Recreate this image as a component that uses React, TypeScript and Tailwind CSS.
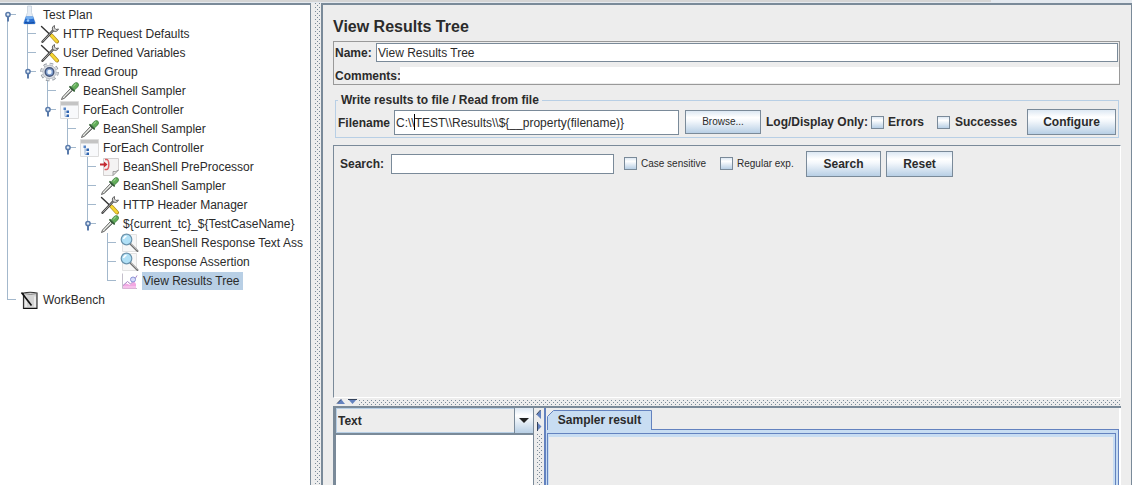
import { ReactNode, useState } from "react";

type IconName =
  | "flask"
  | "tools"
  | "gear"
  | "dropper"
  | "controller"
  | "pre"
  | "magnifier"
  | "chart"
  | "workbench";

interface TreeNode {
  label: string;
  depth: number;
  icon: IconName;
  open?: boolean;
}

const nodes: TreeNode[] = [
  { label: "Test Plan", depth: 0, icon: "flask", open: true },
  { label: "HTTP Request Defaults", depth: 1, icon: "tools" },
  { label: "User Defined Variables", depth: 1, icon: "tools" },
  { label: "Thread Group", depth: 1, icon: "gear", open: true },
  { label: "BeanShell Sampler", depth: 2, icon: "dropper" },
  { label: "ForEach Controller", depth: 2, icon: "controller", open: true },
  { label: "BeanShell Sampler", depth: 3, icon: "dropper" },
  { label: "ForEach Controller", depth: 3, icon: "controller", open: true },
  { label: "BeanShell PreProcessor", depth: 4, icon: "pre" },
  { label: "BeanShell Sampler", depth: 4, icon: "dropper" },
  { label: "HTTP Header Manager", depth: 4, icon: "tools" },
  { label: "${current_tc}_${TestCaseName}", depth: 4, icon: "dropper", open: true },
  { label: "BeanShell Response Text Ass", depth: 5, icon: "magnifier" },
  { label: "Response Assertion", depth: 5, icon: "magnifier" },
  { label: "View Results Tree", depth: 5, icon: "chart" },
  { label: "WorkBench", depth: 0, icon: "workbench" },
];

const icons: Record<IconName, ReactNode> = {
  flask: (
    <>
      <path d="M7.5 1v6.500L3.800 17.500q-.300 1.500 1 1.500h9.400q1.300 0 1-1.500L11.500 7.500V1z" fill="#e6edf5" stroke="#c3cfdc" strokeWidth=".8" />
      <path d="M6 11.500h7l2.200 6q.300 1.500-1 1.500H4.800q-1.300 0-1-1.500z" fill="#2a6fd0" />
      <path d="M6 11.500h7l.7 2q-4 1.500-8.400 0z" fill="#74aff0" />
      <path d="M5 17.500q4.500 1.300 9 0" stroke="#154a9c" />
      <circle cx="8" cy="15.500" r="1.300" fill="#9cccfa" />
    </>
  ),
  tools: (
    <>
      <path d="M1.500 2.500l9 8.500" stroke="#333" strokeWidth="1.400" strokeLinecap="round" />
      <path d="M11.500 11.500l5.500 6" stroke="#a8861c" strokeWidth="4" strokeLinecap="round" />
      <path d="M11.500 11.500l5.300 5.800" stroke="#f5d532" strokeWidth="2.600" strokeLinecap="round" />
      <path d="M2.500 17.800L13 6.500" stroke="#3f3f3f" strokeWidth="2.400" strokeLinecap="round" />
      <path d="M3 17.200L13 6.500" stroke="#b5b5b5" strokeWidth=".9" strokeLinecap="round" />
      <path d="M14.500 1.500q-2.800 1-2.200 3.700.8 2.700 3.500 2.300 2-.500 2.700-2.500l-2.500.500-1.500-1.500z" fill="#d2d2d2" stroke="#4a4a4a" strokeWidth=".8" />
    </>
  ),
  gear: (
    <>
      <circle cx="9.500" cy="10" r="7.800" stroke="#8d939b" strokeWidth="3" strokeDasharray="3.300 2.830" />
      <circle cx="9.500" cy="10" r="7.300" stroke="#dfe2e6" strokeWidth="2.400" strokeDasharray="2.500 3.230" strokeDashoffset="-.4" />
      <circle cx="9.500" cy="10" r="6.700" fill="#dde0e5" stroke="#a3a9b1" strokeWidth=".6" />
      <circle cx="9.500" cy="10" r="4.300" fill="#7f9fd0" stroke="#44557a" strokeWidth="1.400" />
      <circle cx="9.500" cy="10" r="2.200" fill="#f1f6fd" />
    </>
  ),
  dropper: (
    <>
      <path d="M1.500 18.500l1-2.500L10.500 7.500l2 2-8.200 7.800z" fill="#e9ece6" stroke="#555" strokeWidth=".9" />
      <path d="M4.500 16.500l7.500-7.300" stroke="#777" strokeWidth=".8" />
      <path d="M10 5.800l4.200 4" stroke="#2e5c30" strokeWidth="1.800" strokeLinecap="round" />
      <path d="M11.500 5.500l2.700-3q2-1.700 3.800-.3 1.400 1.800-.2 3.700l-3.300 3z" fill="#62ae58" stroke="#3b7a3d" strokeWidth=".7" />
      <path d="M13.500 5l2.400-2.300" stroke="#b4e3ab" />
    </>
  ),
  controller: (
    <>
      <path d="M.5 1.500h18v17H.5z" fill="#f8f9fb" stroke="#dcdcdc" />
      <path d="M1 2h17v3.500H1z" fill="#c4c4c4" />
      <path d="M.5 1.500h18" stroke="#dedede" />
      <path d="M5 8v8.500h3M5 12h3" stroke="#9db6d5" />
      <path d="M3.500 7.500h2.500v2.500H3.500z" fill="#5585c8" />
      <path d="M6.500 10.500H9V13H6.500zM6.500 14.500H9V17H6.500z" fill="#2f64b0" />
    </>
  ),
  pre: (
    <>
      <path d="M3.500 1.500h15v11.500l-5.500 5.500H3.500z" fill="#f4f3f3" stroke="#d2cfcf" />
      <path d="M18.500 13l-5.500 5.500v-4q3 .800 5.500-1.500z" fill="#e3e3e3" stroke="#8e8e8e" strokeWidth=".8" />
      <path d="M0 7.500h5" stroke="#c52b32" strokeWidth="2" />
      <path d="M4 4.500l3.500 3L4 10.500z" fill="#c52b32" />
      <path d="M5 2.500h1.500q2.300 0 2.300 5t-2.300 5H4.500" stroke="#dd6266" strokeWidth="1.500" />
    </>
  ),
  magnifier: (
    <>
      <path d="M2.500 1.500h14v17h-14z" fill="#f7f7f7" stroke="#e2e2e2" />
      <path d="M10.500 11l7 7" stroke="#6f6f6f" strokeWidth="2" strokeLinecap="round" />
      <path d="M11 11l6.500 6.500" stroke="#d0d0d0" strokeWidth=".7" />
      <circle cx="6.500" cy="6.500" r="5.300" fill="#b0e0f6" stroke="#6b93ad" strokeWidth="1.200" />
      <path d="M3.500 6q.7-2.400 3-2.700" stroke="#fff" strokeWidth="1.500" />
    </>
  ),
  chart: (
    <>
      <path d="M2.500 2.500v15H17" stroke="#c4bfcb" />
      <path d="M3 14.500q3-3 5-1.500 2 2 4-1t4 1v4.500H3z" fill="#f2a8e2" />
      <path d="M3 14.500l4.500-4 3 2.500 3.500-3.500 3-5" stroke="#a985c5" />
      <circle cx="13" cy="8.500" r="2.500" fill="#d9dcfa" stroke="#8a93d6" />
      <path d="M3 16h13" stroke="#fad7f4" />
    </>
  ),
  workbench: (
    <>
      <path d="M3.500 3q6.500-1.500 13.500 0v15.500H3.500z" fill="#d4d4d4" stroke="#333" strokeWidth="1.200" />
      <path d="M4.500 3.500q6 2 12 0" stroke="#777" strokeWidth=".8" />
      <path d="M6 6.500v10.500M15 6.500v10.500" stroke="#efefef" strokeWidth="1.600" />
      <path d="M3.500 18.500H17" stroke="#111" strokeWidth="1.400" />
      <path d="M1.500 2.500l10 13" stroke="#111" strokeWidth="1.700" />
    </>
  ),
};

// a guide line goes on below row i when a later sibling sits at that depth
function continues(i: number, depth: number) {
  const next = nodes.slice(i + 1).find((n) => n.depth <= depth);
  return next?.depth === depth;
}

function TreeRow({ node, index, selected, onSelect }: { node: TreeNode; index: number; selected: boolean; onSelect: () => void }) {
  const parents = Array.from({ length: node.depth }, (_, d) => d);
  return (
    <li className="flex h-[19px] items-center">
      {parents.map((d) => (
        <span key={d} className="h-full w-5 shrink-0 pl-[7px]">
          <span className={`block h-full w-px ${continues(index, d) ? "bg-[#a3b8cc]" : ""}`} />
        </span>
      ))}
      <span className="relative h-full w-5 shrink-0 pl-[7px]">
        <span className={`block h-[10px] w-[9px] border-b border-[#a3b8cc] ${index > 0 ? "border-l" : ""}`} />
        <span className={`block h-[9px] w-px ${continues(index, node.depth) ? "bg-[#a3b8cc]" : ""}`} />
        {node.open && (
          <svg viewBox="0 0 7 11" className="absolute left-[5px] top-[6px] h-[11px] w-[7px]">
            <path d="M3 5v5.500" stroke="#5a7bab" strokeWidth="2" />
            <circle cx="3" cy="3.500" r="2.100" fill="#e4edf7" stroke="#5a7bab" strokeWidth="1.500" />
          </svg>
        )}
      </span>
      <svg viewBox="0 0 20 20" fill="none" className="h-5 w-5 shrink-0">
        {icons[node.icon]}
      </svg>
      <button
        onClick={onSelect}
        className={`ml-[2px] h-[18px] shrink-0 whitespace-nowrap pl-px pr-[3px] text-left ${selected ? "bg-[#b8cfe5]" : ""}`}
      >
        {node.label}
      </button>
    </li>
  );
}

const buttonLook =
  "shrink-0 border border-[#7a8a99] bg-[linear-gradient(#dde8f3,#ffffff_30%,#f4f8fc_45%,#b8cfe5)] text-center";
const fieldLook = "border border-[#7a8a99] bg-white outline-none";
const dots =
  "bg-[conic-gradient(from_270deg_at_1px_1px,#7a8a99_90deg,transparent_0),conic-gradient(from_270deg_at_1px_1px,#7a8a99_90deg,transparent_0)] bg-[size:4px_4px] bg-[position:0_0,2px_2px]";

function Check({ label, className }: { label: string; className: string }) {
  return (
    <label className={`flex shrink-0 items-center whitespace-nowrap ${className}`}>
      <input
        type="checkbox"
        className="h-[13px] w-[13px] shrink-0 appearance-none border border-[#7a8a99] bg-[linear-gradient(#dde8f3,#ffffff_30%,#b8cfe5)] checked:bg-[#6382bf]"
      />
      {label}
    </label>
  );
}

export default function App() {
  const [selected, setSelected] = useState(14);
  const [name, setName] = useState("View Results Tree");
  const [comments, setComments] = useState("");
  const [filename, setFilename] = useState("C:\\\\TEST\\\\Results\\\\${__property(filename)}");
  const [query, setQuery] = useState("");

  return (
    <div className="flex h-screen flex-col overflow-hidden bg-[#ededed] font-['Liberation_Sans',Arial,sans-serif] text-xs text-[#2b2b2b]">
      <div className="flex h-[3px] shrink-0 bg-[#e4e9ef]">
        <div className="h-[2px] w-7/8 bg-[#d5d5d5]" />
      </div>
      <div className="flex min-h-0 flex-1">
        <nav className="w-[311px] shrink-0 overflow-hidden border-r border-t-2 border-[#7a8a99] bg-white pr-px">
          <ul className="overflow-hidden">
            {nodes.map((node, i) => (
              <TreeRow key={i} node={node} index={i} selected={i === selected} onSelect={() => setSelected(i)} />
            ))}
          </ul>
        </nav>
        <div className="w-[10px] shrink-0 px-1">
          <div className={`h-full w-[5px] ${dots}`} />
        </div>

        <main className="flex min-w-0 flex-1 flex-col border-l-2 border-r border-t-2 border-l-[#7a8a99] border-r-[#7a8a99] border-t-[#7a8a99] px-[10px]">
          <h1 className="mt-3 text-base leading-5 font-bold">View Results Tree</h1>

          <div className="mt-1 mr-px border border-[#999] pb-px">
            <div className="flex items-center pt-px pr-px">
              <label htmlFor="name" className="w-[42px] shrink-0 pl-px pt-px font-bold">Name:</label>
              <input
                id="name"
                value={name}
                onChange={(e) => setName(e.target.value)}
                className={`h-[19px] min-w-0 flex-1 px-px pt-px ${fieldLook}`}
              />
            </div>
            <div className="mt-[5px] flex h-4 items-center">
              <label htmlFor="comments" className="w-[66px] shrink-0 pl-px pt-[2px] font-bold">Comments:</label>
              <input
                id="comments"
                value={comments}
                onChange={(e) => setComments(e.target.value)}
                className="h-4 min-w-0 flex-1 bg-white outline-none"
              />
            </div>
          </div>

          <fieldset className="mx-[2px] mt-2 min-w-0 border border-[#b8cfe5] px-[2px] pt-[2px] pb-[2px]">
            <legend className="px-[3px] leading-[14px] font-bold">Write results to file / Read from file</legend>
            <div className="flex items-center font-bold">
              <label htmlFor="filename" className="w-14 shrink-0 pt-px">Filename</label>
              <div className="relative min-w-0 flex-1">
                <input
                  id="filename"
                  value={filename}
                  onChange={(e) => setFilename(e.target.value)}
                  className={`block h-[25px] w-full px-px pt-px font-normal ${fieldLook}`}
                />
                <span className="absolute left-5 top-1 h-4 w-px bg-black" />
              </div>
              <button className={`ml-[6px] h-6 w-[76px] text-[10px] font-normal ${buttonLook}`}>Browse...</button>
              <span className="ml-[5px] w-[105px] shrink-0 whitespace-nowrap">Log/Display Only:</span>
              <Check label="Errors" className="w-[66px] gap-1" />
              <Check label="Successes" className="w-[90px] gap-[5px]" />
              <button className={`h-[26px] w-[89px] font-bold ${buttonLook}`}>Configure</button>
            </div>
          </fieldset>

          <section className="mt-[7px] min-h-[180px] flex-1 border border-b-white border-l-[#7a8a99] border-r-white border-t-[#7a8a99]">
            <form className="mt-[5px] flex items-center pl-[6px]" onSubmit={(e) => e.preventDefault()}>
              <label htmlFor="search" className="w-[51px] shrink-0 font-bold">Search:</label>
              <input
                id="search"
                value={query}
                onChange={(e) => setQuery(e.target.value)}
                className={`h-5 w-[223px] min-w-0 px-px ${fieldLook}`}
              />
              <Check label="Case sensitive" className="ml-[10px] w-24 gap-1 text-[10px]" />
              <Check label="Regular exp." className="w-[86px] gap-1 text-[10px]" />
              <button className={`h-[26px] w-[75px] font-bold ${buttonLook}`}>Search</button>
              <button className={`ml-[5px] h-[26px] w-[67px] font-bold ${buttonLook}`}>Reset</button>
            </form>
          </section>

          <div className="flex h-2 shrink-0 items-center">
            <svg viewBox="0 0 26 8" className="h-2 w-[26px] shrink-0">
              <path d="M4 6l4-5 4 5z" fill="#6382bf" />
              <path d="M15 1h9l-4.500 5z" fill="#6382bf" />
              <path d="M4 5.500l4-4M15 1.500h9" stroke="#34435c" />
            </svg>
            <div className={`h-[5px] flex-1 ${dots}`} />
          </div>

          <div className="flex h-[79px] shrink-0 border-t-2 border-[#7a8a99]">
            <div className="flex w-[201px] shrink-0 flex-col border-l-[3px] border-r border-[#7a8a99] bg-white">
              <div className="relative border-b-2 border-[#7a8a99]">
                <select
                  aria-label="Renderer"
                  className="block h-[25px] w-full appearance-none border border-[#b8cfe5] bg-[#ededed] px-px font-bold outline-none"
                >
                  <option>Text</option>
                  <option>HTML</option>
                  <option>XML</option>
                </select>
                <span className="pointer-events-none absolute inset-y-0 right-0 flex w-[19px] items-center justify-center border-l border-[#7a8a99] bg-[linear-gradient(#dde8f3,#ffffff_30%,#b8cfe5)]">
                  <svg viewBox="0 0 10 5" className="h-[5px] w-[10px]">
                    <path d="M0 0h10L5 5z" fill="#222" />
                  </svg>
                </span>
              </div>
            </div>
            <div className="flex w-[10px] shrink-0 flex-col items-center">
              <svg viewBox="0 0 10 26" className="h-[26px] w-[10px] shrink-0">
                <path d="M7 2v9L2.500 6.500zM3 14v9l4.500-4.500z" fill="#6382bf" />
                <path d="M6.500 2L2.500 6.500M3.500 14v9" stroke="#34435c" />
              </svg>
              <div className={`w-[5px] flex-1 ${dots}`} />
            </div>
            <div className="flex min-w-0 flex-1 flex-col border-l-2 border-r-2 border-l-[#6382bf] border-r-white">
              <div className="flex pl-px pt-[2px]">
                <button className="relative h-5 w-[105px] shrink-0 text-center leading-5 font-bold">
                  <svg viewBox="0 0 105 20" preserveAspectRatio="none" className="absolute inset-0 h-full w-full">
                    <path d="M.5 20V6.500L6.500.5h98V20" fill="#c8ddf2" stroke="#6382bf" />
                  </svg>
                  <span className="relative">Sampler result</span>
                </button>
                <div className="flex-1 border-b border-[#6382bf]" />
              </div>
              <div className="min-h-0 flex-1 border-r border-[#6382bf] bg-[#c8ddf2] pl-px pr-[2px] pt-[3px]">
                <div className="h-full border-l border-r border-t border-[#6382bf] bg-[#c8ddf2] pl-px pr-[2px] pt-[3px]">
                  <div className="h-full bg-[#ededed]" />
                </div>
              </div>
            </div>
          </div>
        </main>
      </div>
    </div>
  );
}
